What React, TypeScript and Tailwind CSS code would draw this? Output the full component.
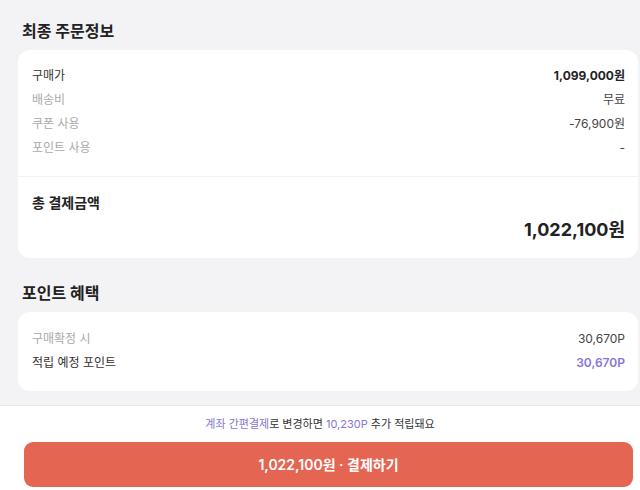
import React from "react";

const rows = [
  { label: "구매가", value: "1,099,000원", labelCls: "text-[#333]", valueCls: "font-bold text-[#222]" },
  { label: "배송비", value: "무료", labelCls: "text-[#aaa]", valueCls: "text-[#444]" },
  { label: "쿠폰 사용", value: "-76,900원", labelCls: "text-[#aaa]", valueCls: "text-[#444]" },
  { label: "포인트 사용", value: "-", labelCls: "text-[#aaa]", valueCls: "text-[#444]" },
];

const App = () => {
  return (
    <div
      className="w-[640px] h-[490px] overflow-hidden flex flex-col bg-[#f3f3f5]"
      style={{ fontFamily: 'Inter, "Noto Sans CJK KR", sans-serif' }}
    >
      {/* order info */}
      <div className="flex-1 flex flex-col">
        <h2 className="ml-[22px] mt-[19px] h-[24px] text-[16px] leading-[24px] font-bold text-[#222]">
          최종 주문정보
        </h2>
        <div className="ml-[18px] mr-[2px] mt-[7px] bg-white rounded-[12px]">
          <div className="pt-[14px] pb-[16px] pl-[14px] pr-[13px] flex flex-col">
            {rows.map((r) => (
              <div key={r.label} className="flex justify-between items-center h-[24px] text-[12px]">
                <span className={r.labelCls}>{r.label}</span>
                <span className={r.valueCls}>{r.value}</span>
              </div>
            ))}
          </div>
          <div className="h-px bg-[#f2f2f4]" />
          <div className="pl-[14px] pr-[13px] pt-[15px] pb-[14px] flex flex-col">
            <span className="text-[14px] leading-[22px] font-semibold text-[#222]">총 결제금액</span>
            <span className="self-end mt-[2px] text-[18px] leading-[28px] font-bold text-[#222]">
              1,022,100원
            </span>
          </div>
        </div>

        {/* point benefit */}
        <h2 className="ml-[22px] mt-[23px] h-[24px] text-[16px] leading-[24px] font-bold text-[#222]">
          포인트 혜택
        </h2>
        <div className="ml-[18px] mr-[2px] mt-[7px] bg-white rounded-[12px] pt-[15px] pb-[16px] pl-[14px] pr-[13px] flex flex-col">
          <div className="flex justify-between items-center h-[24px] text-[12px]">
            <span className="text-[#aaa]">구매확정 시</span>
            <span className="text-[#444]">30,670P</span>
          </div>
          <div className="flex justify-between items-center h-[24px] text-[12px]">
            <span className="text-[#333]">적립 예정 포인트</span>
            <span className="font-semibold text-[#8a74d8]">30,670P</span>
          </div>
        </div>
      </div>

      {/* bottom bar */}
      <div className="h-[85px] bg-white border-t border-[#e8e8ea] flex flex-col">
        <p className="mt-[10px] h-[16px] text-center text-[11px] leading-[16px] text-[#333]">
          <span className="text-[#8a74d8]">계좌 간편결제</span>로 변경하면{" "}
          <span className="text-[#8a74d8]">10,230P</span> 추가 적립돼요
        </p>
        <button className="ml-[24px] mr-[7px] mt-[10px] h-[45px] rounded-[9px] bg-[#e46552] text-white text-[14px] font-semibold">
          1,022,100원 · 결제하기
        </button>
      </div>
    </div>
  );
};

export default App;
